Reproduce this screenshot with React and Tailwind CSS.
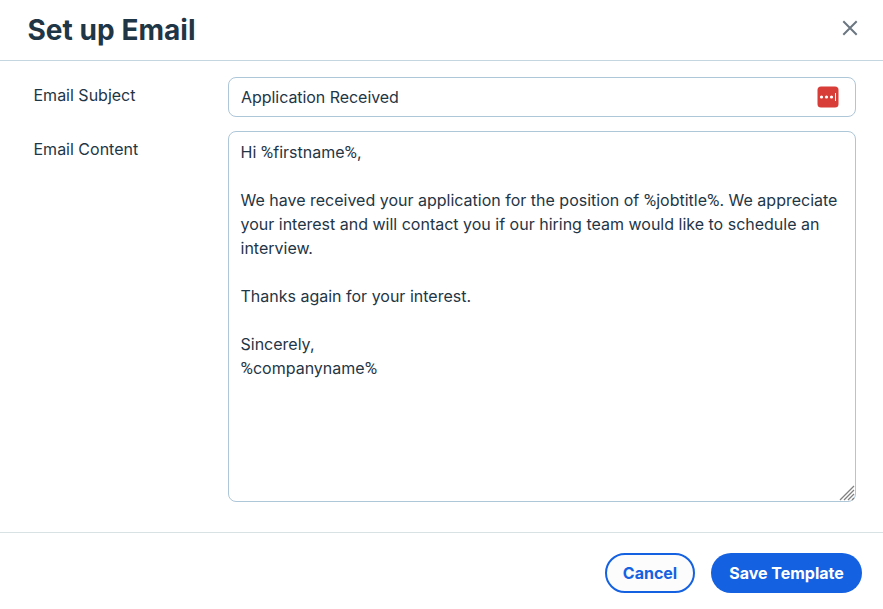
import React, { useState } from "react";

const defaultContent = `Hi %firstname%,

We have received your application for the position of %jobtitle%. We appreciate your interest and will contact you if our hiring team would like to schedule an interview.

Thanks again for your interest.

Sincerely,
%companyname%`;

// Splits the template so the % marks around placeholders can be styled
function TemplateText({ text }) {
  return text.split(/(%)/).map((part, i) =>
    part === "%" ? (
      <span key={i} className="font-['Roboto'] text-[17px] leading-none">%</span>
    ) : (
      part
    )
  );
}

export default function App() {
  const [subject, setSubject] = useState("Application Received");

  return (
    <div className="flex h-screen flex-col bg-white font-['Inter',sans-serif] text-[#1f3646]">
      <header className="flex h-[61px] items-center justify-between border-b border-[#c4d7e0] pr-[25px] pl-[27.5px]">
        <h1 className="text-[28px] font-bold tracking-[0.04px]">Set up Email</h1>
        <button type="button" aria-label="Close" className="-mt-1">
          <svg className="size-4" viewBox="0 0 16 16" fill="none" stroke="#6b7680" strokeWidth="2">
            <path d="M1.3 1.3l13.4 13.4M14.7 1.3L1.3 14.7" />
          </svg>
        </button>
      </header>

      <main className="flex flex-1 flex-col gap-3.5 pt-4 pr-[27px] pl-[33.5px]">
        <div className="flex">
          <label htmlFor="subject" className="w-[194.5px] pt-1.5 text-base">Email Subject</label>
          <div className="flex h-10 flex-1 items-center rounded-lg border border-[#adc6d8] pr-4 pl-3">
            <input
              id="subject"
              type="text"
              className="min-w-0 flex-1 text-base tracking-[-0.05px] outline-none"
              value={subject}
              onChange={(e) => setSubject(e.target.value)}
            />
            <svg className="size-[22px]" viewBox="0 0 22 22">
              <rect x="0.5" y="0.5" width="21" height="21" rx="3.5" fill="#d83d38" />
              <circle cx="4.5" cy="11" r="1.6" fill="#fff" />
              <circle cx="9.5" cy="11" r="1.6" fill="#fff" />
              <circle cx="14.5" cy="11" r="1.6" fill="#fff" />
              <path d="M18.5 7v8" stroke="#fff" />
            </svg>
          </div>
        </div>

        <div className="flex">
          <span id="content-label" className="w-[194.5px] pt-1.5 text-base">Email Content</span>
          <div className="relative h-[371px] flex-1 rounded-lg border border-[#adc6d8]">
            <div
              role="textbox"
              aria-multiline="true"
              aria-labelledby="content-label"
              contentEditable
              suppressContentEditableWarning
              className="h-full overflow-auto py-2 pr-3 pl-[11.5px] text-base whitespace-pre-wrap outline-none"
            >
              <TemplateText text={defaultContent} />
            </div>
            <svg className="absolute right-0 bottom-0 size-4" viewBox="0 0 16 16" stroke="#808080" strokeWidth="1.3">
              <path d="M1 15L15 1M5 15L15 5M9 15l6-6M13 15l2-2" />
            </svg>
          </div>
        </div>
      </main>

      <footer className="flex h-[77px] justify-end gap-4 border-t border-[#d8e2e4] pt-5 pr-[21px]">
        <button type="button" className="h-10 w-[90px] rounded-full border-2 border-[#1461e1] bg-[#fcfcfc] font-bold text-[#1461e1]">
          Cancel
        </button>
        <button type="button" className="h-10 w-[151px] rounded-full bg-[#1461e1] font-bold text-white">
          Save Template
        </button>
      </footer>
    </div>
  );
}
